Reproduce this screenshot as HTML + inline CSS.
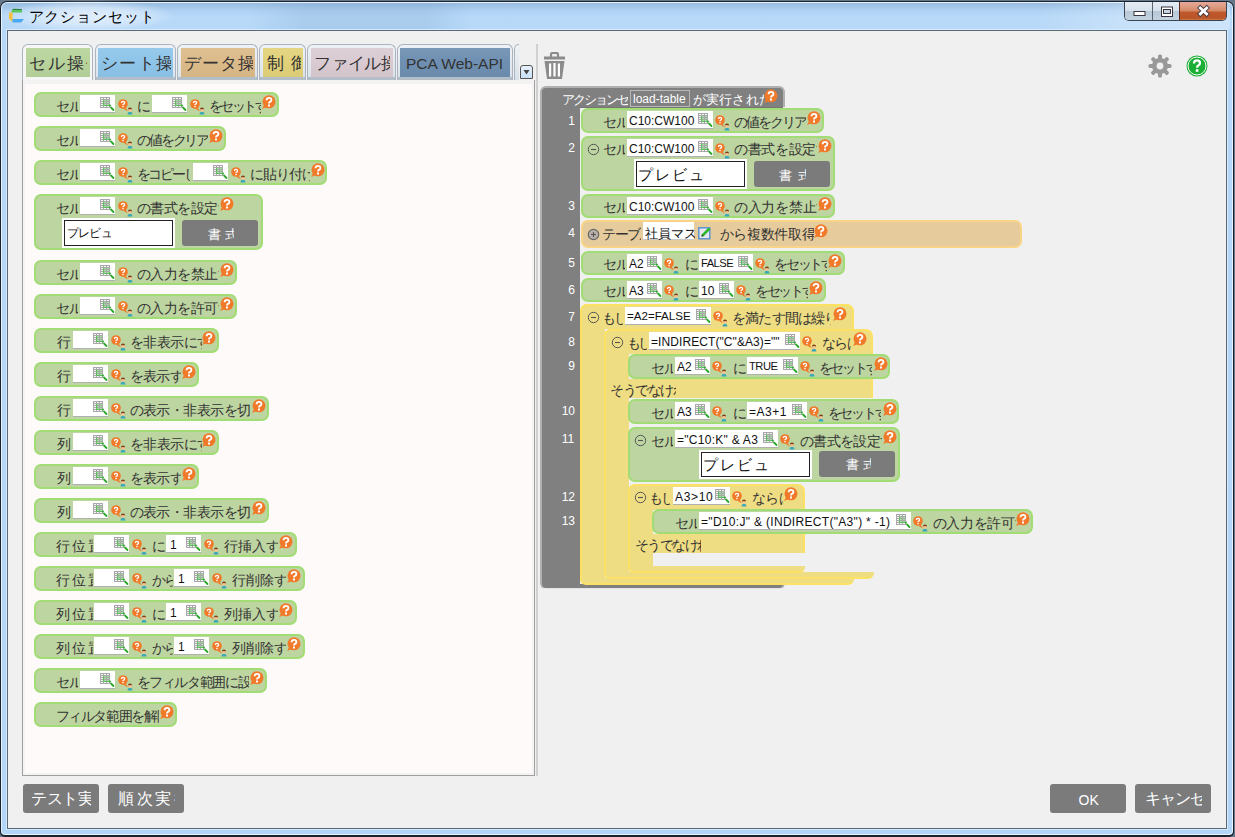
<!DOCTYPE html>
<html><head><meta charset="utf-8"><title>アクションセット設定</title>
<style>
html,body{margin:0;padding:0;width:1235px;height:837px;overflow:hidden;background:#66788a}
body{position:relative;font-family:"Liberation Sans", sans-serif}
body>div,body>span,body>svg{position:absolute}
.t{white-space:nowrap;font-family:"Liberation Sans", sans-serif}
.inp{height:17px;background:#fff;border-bottom:1px solid #b0b0b0}
.btn{background:#7b7b7b;color:#fff;border-radius:3px;text-align:center;font-family:"Liberation Sans", sans-serif}
</style></head>
<body>

<svg width="0" height="0" style="position:absolute;left:0;top:0">
<defs>
<symbol id="grid" viewBox="0 0 15 15">
 <rect x="0" y="0" width="10" height="11" fill="#a8a8a8"/>
 <path d="M1 1H3V2H1ZM4 1H6V2H4ZM7 1H9V2H7ZM1 3H3V4H1ZM1 5H3V6H1ZM1 7H3V8H1ZM1 9H3V10H1ZM4 9H6V10H4ZM7 9H9V10H7Z" fill="#f6f6f6"/>
 <path d="M4 3H6V4H4ZM7 3H9V4H7ZM4 5H6V6H4ZM7 5H9V6H7ZM4 7H6V8H4ZM7 7H9V8H7Z" fill="#9ee09e"/>
 <path d="M3.5 3V8.5H9.5" stroke="#4cc04c" stroke-width="0.8" fill="none"/>
 <path d="M11 10.5L13.5 13" stroke="#2aa82a" stroke-width="1.8" stroke-linecap="round"/>
 <circle cx="10" cy="8.5" r="0.9" fill="#2aa02a"/>
</symbol>
<symbol id="qi" viewBox="0 0 16 16">
 <path d="M7.5 8.5L10 12.5L5.5 9.8Z" fill="#f07a2a"/>
 <circle cx="5" cy="5" r="4.8" fill="#f07a2a"/>
 <path d="M3.5 4Q3.5 2.3 5 2.3Q6.6 2.3 6.6 3.7Q6.6 4.6 5.6 5.1Q5 5.4 5 6.1" stroke="#fff" stroke-width="1.3" fill="none"/>
 <rect x="4.3" y="6.8" width="1.4" height="1.4" fill="#fff"/>
 <path d="M9.6 15.5Q9.6 12.8 12 12.8Q14.4 12.8 14.4 15.5Z" fill="#3aa8b8"/>
 <circle cx="12" cy="10.8" r="2" fill="#f2c494"/>
 <path d="M9.9 10.4Q10 8.4 12 8.4Q14 8.4 14.1 10.4Q12 9.4 9.9 10.4Z" fill="#7a3a12"/>
</symbol>
<symbol id="bq" viewBox="0 0 15 15">
 <path d="M3.2 9.5L1.2 14L7 11.5Z" fill="#f07a2a"/>
 <circle cx="8" cy="6.8" r="6.5" fill="#f07a2a"/>
 <path d="M5.6 5.3Q5.6 2.9 8 2.9Q10.4 2.9 10.4 4.9Q10.4 6.2 8.9 6.9Q8 7.4 8 8.5" stroke="#fff" stroke-width="1.9" fill="none"/>
 <rect x="7" y="9.5" width="2" height="2" fill="#fff"/>
</symbol>
<symbol id="minus" viewBox="0 0 13 13">
 <circle cx="6.5" cy="6.5" r="5.2" fill="none" stroke="#555" stroke-width="1"/>
 <path d="M4 6.5H9" stroke="#555" stroke-width="1.1"/>
</symbol>
<symbol id="plus" viewBox="0 0 13 13">
 <circle cx="6.5" cy="6.5" r="5.2" fill="#b8b0a8" stroke="#666" stroke-width="1.2"/>
 <path d="M4 6.5H9M6.5 4V9" stroke="#555" stroke-width="1.1"/>
</symbol>
<symbol id="edit" viewBox="0 0 14 14">
 <rect x="0.8" y="1.8" width="11" height="11" fill="#e8e4f0" stroke="#4a8ad0" stroke-width="1.3"/>
 <path d="M4 10L11.5 2.5" stroke="#2eb82e" stroke-width="2.6"/>
 <path d="M3 11L4.5 8.5L5.5 9.5Z" fill="#333"/>
</symbol>
<symbol id="tri" viewBox="0 0 13 14">
 <path d="M3.5 5H9.5L6.5 9.5Z" fill="#444"/>
</symbol>
<symbol id="trash" viewBox="0 0 23 28">
 <path d="M8 5V2.5Q8 1 9.5 1H13.5Q15 1 15 2.5V5" stroke="#8c8c8c" stroke-width="2.2" fill="none"/>
 <rect x="1" y="4.5" width="21" height="3" fill="#8c8c8c"/>
 <path d="M1.5 9H21.5L19 27H4Z" fill="#8c8c8c"/>
 <rect x="6" y="11.5" width="2.2" height="13" fill="#fff"/>
 <rect x="10.4" y="11" width="2.2" height="13.5" fill="#fff"/>
 <rect x="14.8" y="11.5" width="2.2" height="13" fill="#fff"/>
</symbol>
<symbol id="gear" viewBox="0 0 24 24">
 <g fill="#999" transform="translate(12 12)">
  <circle r="8"/>
  <rect x="-2" y="-11.5" width="4" height="6" rx="1.5"/>
  <rect x="-2" y="-11.5" width="4" height="6" rx="1.5" transform="rotate(45)"/>
  <rect x="-2" y="-11.5" width="4" height="6" rx="1.5" transform="rotate(90)"/>
  <rect x="-2" y="-11.5" width="4" height="6" rx="1.5" transform="rotate(135)"/>
  <rect x="-2" y="-11.5" width="4" height="6" rx="1.5" transform="rotate(180)"/>
  <rect x="-2" y="-11.5" width="4" height="6" rx="1.5" transform="rotate(225)"/>
  <rect x="-2" y="-11.5" width="4" height="6" rx="1.5" transform="rotate(270)"/>
  <rect x="-2" y="-11.5" width="4" height="6" rx="1.5" transform="rotate(315)"/>
 </g>
 <circle cx="12" cy="12" r="3.4" fill="#f0f0f0"/>
</symbol>
<symbol id="help" viewBox="0 0 22 22">
 <circle cx="11" cy="11" r="10.5" fill="#1aae34"/>
 <circle cx="11" cy="11" r="9" fill="none" stroke="#fff" stroke-width="1"/>
 <path d="M8 8.5Q8 5.3 11 5.3Q14 5.3 14 8Q14 9.6 12.3 10.5Q11.1 11.2 11.1 12.8" stroke="#fff" stroke-width="2.3" fill="none"/>
 <rect x="9.8" y="14.2" width="2.6" height="2.6" fill="#fff"/>
</symbol>
<symbol id="appicon" viewBox="0 0 15 16">
 <path d="M2 3.5L4.5 0.5L13 1V4.5H3Z" fill="#5cc85c"/>
 <path d="M3.5 1.5H13" stroke="#3a7a5a" stroke-width="1"/>
 <path d="M0 4.5H3.5V14L0 11Z" fill="#f5c040"/>
 <path d="M3.5 11H15L12 14.5H3.5Z" fill="#48a8f0"/>
</symbol>
<symbol id="capmin" viewBox="0 0 102 20">
 <rect x="10" y="10.5" width="11" height="4" fill="#fff" stroke="#3a3440" stroke-width="1"/>
 <rect x="37.5" y="6" width="11" height="9.5" fill="#fff" stroke="#3a3440" stroke-width="1"/>
 <rect x="39.5" y="8.5" width="7" height="4" fill="#c8d4e0" stroke="#3a3440" stroke-width="1"/>
 <path d="M76.3 6.9L82.7 12.9M82.7 6.9L76.3 12.9" stroke="#3a3440" stroke-width="4.6" stroke-linecap="square"/>
 <path d="M76.3 6.9L82.7 12.9M82.7 6.9L76.3 12.9" stroke="#fff" stroke-width="2.8" stroke-linecap="square"/>
</symbol>
</defs>
</svg>

<div style="left:0;top:1px;width:1234px;height:836px;background:#1a2230;border-radius:7px 7px 5px 5px"></div>
<div style="left:1px;top:2px;width:1232px;height:833px;background:#e6f2fe;border-radius:6px 6px 4px 4px"></div>
<div style="left:2px;top:3px;width:1230px;height:831px;background:linear-gradient(180deg,#98bce0 0px,#b0d2f4 8px,#b8d9f8 14px,#b6d7f7 40px,#b3d5f7 100%);border-radius:5px 5px 3px 3px"></div>
<div style="left:250px;top:3px;width:220px;height:26px;background:linear-gradient(90deg,rgba(120,160,200,0) 0%,rgba(120,160,200,.22) 25%,rgba(120,160,200,.22) 80%,rgba(120,160,200,0) 100%)"></div>
<div style="left:0px;top:0px;width:175px;height:32px;background:radial-gradient(closest-side ellipse at 50% 50%,rgba(232,242,252,.85) 0%,rgba(232,242,252,.6) 55%,rgba(232,242,252,0) 100%)"></div>
<div style="left:1040px;top:3px;width:190px;height:26px;background:linear-gradient(110deg,rgba(255,255,255,0) 0%,rgba(255,255,255,.22) 45%,rgba(255,255,255,.3) 100%)"></div>
<div style="left:6px;top:29px;width:1222px;height:801px;background:#d6eafd"></div>
<div style="left:7px;top:30px;width:1218px;height:797px;background:#f0f0f0;border:1px solid #5a6878"></div>
<svg style="left:9px;top:8px" width="15" height="16" viewBox="0 0 15 16"><use href="#appicon"/></svg>
<span class="t" style="left:28.5px;top:6.5px;width:122px;overflow:hidden;font-size:15px;line-height:19px;letter-spacing:0.94px;color:#000;">アクションセット設定</span>
<div style="left:1124px;top:2px;width:101px;height:18px;border:1px solid #3c4450;border-top:none;border-radius:0 0 5px 5px;overflow:hidden"><div style="position:absolute;left:0;top:0;width:27px;height:19px;background:linear-gradient(180deg,#e4ecf4 0%,#d6e1ec 45%,#b9c8d6 50%,#c4d3e0 100%);border-right:1px solid #5a6470"></div><div style="position:absolute;left:28px;top:0;width:26px;height:19px;background:linear-gradient(180deg,#e4ecf4 0%,#d6e1ec 45%,#b9c8d6 50%,#c4d3e0 100%);border-right:1px solid #5a2a1a"></div><div style="position:absolute;left:55px;top:0;width:46px;height:19px;background:linear-gradient(180deg,#e6a89a 0%,#dc9a80 25%,#d48a68 45%,#c0582a 55%,#b85428 85%,#d8905a 100%)"></div></div>
<svg style="left:1124px;top:1px" width="102" height="20" viewBox="0 0 102 20"><use href="#capmin"/></svg>
<div style="left:22px;top:44px;width:69px;height:40px;background:#f6f6f6;border:1px solid #a9b4c0;border-bottom:none;border-radius:6px 6px 0 0"></div>
<div style="left:26px;top:48px;width:64px;height:29px;background:linear-gradient(180deg,#bdd7a3 0%,#b8d49c 45%,#b2cd97 100%)"></div>
<span class="t" style="left:29.3px;top:52.5px;width:58px;overflow:hidden;font-size:17px;line-height:21px;letter-spacing:1.97px;color:#333;">セル操作</span>
<div style="left:95px;top:44px;width:79px;height:36px;background:linear-gradient(180deg,#eef2f6,#d8e0e8);border:1px solid #a9b4c0;border-bottom:none;border-radius:6px 6px 0 0"></div>
<div style="left:96px;top:77px;width:79px;height:4px;background:#b4bec8"></div>
<div style="left:98px;top:48px;width:75px;height:29px;background:linear-gradient(180deg,#97c9ea 0%,#8ec5e9 45%,#89bfe2 100%)"></div>
<span class="t" style="left:101.3px;top:52.5px;width:70px;overflow:hidden;font-size:17px;line-height:21px;letter-spacing:1.16px;color:#333;">シート操作</span>
<div style="left:177px;top:44px;width:79px;height:36px;background:linear-gradient(180deg,#eef2f6,#d8e0e8);border:1px solid #a9b4c0;border-bottom:none;border-radius:6px 6px 0 0"></div>
<div style="left:178px;top:77px;width:79px;height:4px;background:#b4bec8"></div>
<div style="left:181px;top:48px;width:74px;height:29px;background:linear-gradient(180deg,#dec093 0%,#dcbb8a 45%,#d5b585 100%)"></div>
<span class="t" style="left:184.3px;top:52.5px;width:69px;overflow:hidden;font-size:17px;line-height:21px;letter-spacing:0.91px;color:#333;">データ操作</span>
<div style="left:259px;top:44px;width:45px;height:36px;background:linear-gradient(180deg,#eef2f6,#d8e0e8);border:1px solid #a9b4c0;border-bottom:none;border-radius:6px 6px 0 0"></div>
<div style="left:260px;top:77px;width:45px;height:4px;background:#b4bec8"></div>
<div style="left:263px;top:48px;width:40px;height:29px;background:linear-gradient(180deg,#e4d584 0%,#e2d27a 45%,#dbcb76 100%)"></div>
<span class="t" style="left:267.3px;top:52.5px;width:34px;overflow:hidden;font-size:17px;line-height:21px;letter-spacing:6.90px;color:#333;">制御</span>
<div style="left:307px;top:44px;width:87px;height:36px;background:linear-gradient(180deg,#eef2f6,#d8e0e8);border:1px solid #a9b4c0;border-bottom:none;border-radius:6px 6px 0 0"></div>
<div style="left:308px;top:77px;width:87px;height:4px;background:#b4bec8"></div>
<div style="left:311px;top:48px;width:82px;height:29px;background:linear-gradient(180deg,#dccfd6 0%,#dacbd3 45%,#d3c4cc 100%)"></div>
<span class="t" style="left:314.3px;top:52.5px;width:76px;overflow:hidden;font-size:17px;line-height:21px;letter-spacing:-0.32px;color:#333;">ファイル操作</span>
<div style="left:397px;top:44px;width:114px;height:36px;background:linear-gradient(180deg,#eef2f6,#d8e0e8);border:1px solid #a9b4c0;border-bottom:none;border-radius:6px 6px 0 0"></div>
<div style="left:398px;top:77px;width:114px;height:4px;background:#b4bec8"></div>
<div style="left:400px;top:48px;width:110px;height:29px;background:linear-gradient(180deg,#7a98b8 0%,#6f90b2 45%,#6b8bac 100%)"></div>
<span class="t" style="left:406px;top:54.0px;font-size:15.5px;line-height:19.5px;color:#333;">PCA Web-API</span>
<div style="left:514px;top:44px;width:4px;height:36px;background:linear-gradient(180deg,#eef2f6,#d8e0e8);border-left:1px solid #a9b4c0;border-top:1px solid #a9b4c0;border-radius:5px 0 0 0"></div>
<div style="left:520px;top:65px;width:11px;height:12px;background:linear-gradient(180deg,#e8f2fc,#c8e0f6);border:1px solid #555;border-radius:3px 3px 0 0"></div>
<svg style="left:520px;top:65px" width="13" height="14" viewBox="0 0 13 14"><use href="#tri"/></svg>
<div style="left:22px;top:80px;width:511px;height:695px;background:#f3f3f3;border:1px solid #a0a0a0;border-top:none"></div>
<div style="left:25px;top:84px;width:507px;height:689px;background:#fdfaf9"></div>
<div style="left:536px;top:44px;width:2px;height:732px;background:#d0d0d0"></div>
<div style="left:34px;top:92px;width:241px;height:21px;background:#bdd5a0;border:2px solid #a2dc74;border-radius:7px;"></div>
<span class="t" style="left:55.6px;top:97.0px;width:22px;overflow:hidden;font-size:14px;line-height:18px;letter-spacing:-0.20px;color:#333;">セル</span>
<div class="inp" style="left:80px;top:95px;width:35px;"></div>
<svg style="left:100px;top:97px" width="15" height="15" viewBox="0 0 15 15"><use href="#grid"/></svg>
<svg style="left:117.5px;top:99px" width="16" height="16" viewBox="0 0 16 16"><use href="#qi"/></svg>
<span class="t" style="left:137.2px;top:97.0px;width:13px;overflow:hidden;font-size:14px;line-height:18px;letter-spacing:0.00px;color:#333;">に</span>
<div class="inp" style="left:152px;top:95px;width:35px;"></div>
<svg style="left:172px;top:97px" width="15" height="15" viewBox="0 0 15 15"><use href="#grid"/></svg>
<svg style="left:189.5px;top:99px" width="16" height="16" viewBox="0 0 16 16"><use href="#qi"/></svg>
<span class="t" style="left:208.6px;top:97.0px;width:52px;overflow:hidden;font-size:14px;line-height:18px;letter-spacing:-2.44px;color:#333;">をセットする</span>
<svg style="left:261px;top:95px" width="15" height="15" viewBox="0 0 15 15"><use href="#bq"/></svg>
<div style="left:34px;top:126px;width:188px;height:21px;background:#bdd5a0;border:2px solid #a2dc74;border-radius:7px;"></div>
<span class="t" style="left:55.6px;top:131.0px;width:22px;overflow:hidden;font-size:14px;line-height:18px;letter-spacing:-0.20px;color:#333;">セル</span>
<div class="inp" style="left:80px;top:129px;width:35px;"></div>
<svg style="left:100px;top:131px" width="15" height="15" viewBox="0 0 15 15"><use href="#grid"/></svg>
<svg style="left:117.5px;top:133px" width="16" height="16" viewBox="0 0 16 16"><use href="#qi"/></svg>
<span class="t" style="left:136.6px;top:131.0px;width:71px;overflow:hidden;font-size:14px;line-height:18px;letter-spacing:-2.03px;color:#333;">の値をクリアする</span>
<svg style="left:208px;top:129px" width="15" height="15" viewBox="0 0 15 15"><use href="#bq"/></svg>
<div style="left:34px;top:160px;width:289px;height:21px;background:#bdd5a0;border:2px solid #a2dc74;border-radius:7px;"></div>
<span class="t" style="left:55.6px;top:165.0px;width:22px;overflow:hidden;font-size:14px;line-height:18px;letter-spacing:-0.20px;color:#333;">セル</span>
<div class="inp" style="left:80px;top:163px;width:35px;"></div>
<svg style="left:100px;top:165px" width="15" height="15" viewBox="0 0 15 15"><use href="#grid"/></svg>
<svg style="left:117.5px;top:167px" width="16" height="16" viewBox="0 0 16 16"><use href="#qi"/></svg>
<span class="t" style="left:136.6px;top:165.0px;width:53px;overflow:hidden;font-size:14px;line-height:18px;letter-spacing:-2.24px;color:#333;">をコピーして</span>
<div class="inp" style="left:193px;top:163px;width:35px;"></div>
<svg style="left:213px;top:165px" width="15" height="15" viewBox="0 0 15 15"><use href="#grid"/></svg>
<svg style="left:230.5px;top:167px" width="16" height="16" viewBox="0 0 16 16"><use href="#qi"/></svg>
<span class="t" style="left:249.6px;top:165.0px;width:60px;overflow:hidden;font-size:14px;line-height:18px;letter-spacing:-0.84px;color:#333;">に貼り付ける</span>
<svg style="left:310px;top:163px" width="15" height="15" viewBox="0 0 15 15"><use href="#bq"/></svg>
<div style="left:34px;top:194px;width:225px;height:52px;background:#bdd5a0;border:2px solid #a2dc74;border-radius:7px;"></div>
<span class="t" style="left:55.6px;top:199.0px;width:22px;overflow:hidden;font-size:14px;line-height:18px;letter-spacing:-0.20px;color:#333;">セル</span>
<div class="inp" style="left:80px;top:197px;width:35px;"></div>
<svg style="left:100px;top:199px" width="15" height="15" viewBox="0 0 15 15"><use href="#grid"/></svg>
<svg style="left:117.5px;top:201px" width="16" height="16" viewBox="0 0 16 16"><use href="#qi"/></svg>
<span class="t" style="left:136.6px;top:199.0px;width:82px;overflow:hidden;font-size:14px;line-height:18px;letter-spacing:-0.46px;color:#333;">の書式を設定する</span>
<svg style="left:219px;top:197px" width="15" height="15" viewBox="0 0 15 15"><use href="#bq"/></svg>
<div style="left:62px;top:218px;width:113px;height:30px;background:#fff"></div>
<div style="left:64px;top:220px;width:107px;height:24px;border:1px solid #222;background:#fff"></div>
<span class="t" style="left:66.8px;top:225.0px;width:44px;overflow:hidden;font-size:12px;line-height:16px;letter-spacing:-0.65px;color:#111;">プレビュー</span>
<div class="btn" style="left:182px;top:220px;width:76px;height:26px"></div>
<span class="t" style="left:207.7px;top:225.5px;width:26px;overflow:hidden;font-size:13px;line-height:17px;letter-spacing:4.60px;color:#fff;">書式</span>
<div style="left:34px;top:260px;width:199px;height:21px;background:#bdd5a0;border:2px solid #a2dc74;border-radius:7px;"></div>
<span class="t" style="left:55.6px;top:265.0px;width:22px;overflow:hidden;font-size:14px;line-height:18px;letter-spacing:-0.20px;color:#333;">セル</span>
<div class="inp" style="left:80px;top:263px;width:35px;"></div>
<svg style="left:100px;top:265px" width="15" height="15" viewBox="0 0 15 15"><use href="#grid"/></svg>
<svg style="left:117.5px;top:267px" width="16" height="16" viewBox="0 0 16 16"><use href="#qi"/></svg>
<span class="t" style="left:136.6px;top:265.0px;width:82px;overflow:hidden;font-size:14px;line-height:18px;letter-spacing:-0.46px;color:#333;">の入力を禁止する</span>
<svg style="left:219px;top:263px" width="15" height="15" viewBox="0 0 15 15"><use href="#bq"/></svg>
<div style="left:34px;top:294px;width:199px;height:21px;background:#bdd5a0;border:2px solid #a2dc74;border-radius:7px;"></div>
<span class="t" style="left:55.6px;top:299.0px;width:22px;overflow:hidden;font-size:14px;line-height:18px;letter-spacing:-0.20px;color:#333;">セル</span>
<div class="inp" style="left:80px;top:297px;width:35px;"></div>
<svg style="left:100px;top:299px" width="15" height="15" viewBox="0 0 15 15"><use href="#grid"/></svg>
<svg style="left:117.5px;top:301px" width="16" height="16" viewBox="0 0 16 16"><use href="#qi"/></svg>
<span class="t" style="left:136.6px;top:299.0px;width:82px;overflow:hidden;font-size:14px;line-height:18px;letter-spacing:-0.46px;color:#333;">の入力を許可する</span>
<svg style="left:219px;top:297px" width="15" height="15" viewBox="0 0 15 15"><use href="#bq"/></svg>
<div style="left:34px;top:328px;width:181px;height:21px;background:#bdd5a0;border:2px solid #a2dc74;border-radius:7px;"></div>
<span class="t" style="left:57.2px;top:333.0px;width:14px;overflow:hidden;font-size:14px;line-height:18px;letter-spacing:0.00px;color:#333;">行</span>
<div class="inp" style="left:73px;top:331px;width:35px;"></div>
<svg style="left:93px;top:333px" width="15" height="15" viewBox="0 0 15 15"><use href="#grid"/></svg>
<svg style="left:110.5px;top:335px" width="16" height="16" viewBox="0 0 16 16"><use href="#qi"/></svg>
<span class="t" style="left:129.6px;top:333.0px;width:72px;overflow:hidden;font-size:14px;line-height:18px;letter-spacing:-0.45px;color:#333;">を非表示にする</span>
<svg style="left:201px;top:331px" width="15" height="15" viewBox="0 0 15 15"><use href="#bq"/></svg>
<div style="left:34px;top:362px;width:161px;height:21px;background:#bdd5a0;border:2px solid #a2dc74;border-radius:7px;"></div>
<span class="t" style="left:57.2px;top:367.0px;width:14px;overflow:hidden;font-size:14px;line-height:18px;letter-spacing:0.00px;color:#333;">行</span>
<div class="inp" style="left:73px;top:365px;width:35px;"></div>
<svg style="left:93px;top:367px" width="15" height="15" viewBox="0 0 15 15"><use href="#grid"/></svg>
<svg style="left:110.5px;top:369px" width="16" height="16" viewBox="0 0 16 16"><use href="#qi"/></svg>
<span class="t" style="left:129.6px;top:367.0px;width:51px;overflow:hidden;font-size:14px;line-height:18px;letter-spacing:-0.68px;color:#333;">を表示する</span>
<svg style="left:181px;top:365px" width="15" height="15" viewBox="0 0 15 15"><use href="#bq"/></svg>
<div style="left:34px;top:396px;width:231px;height:21px;background:#bdd5a0;border:2px solid #a2dc74;border-radius:7px;"></div>
<span class="t" style="left:57.2px;top:401.0px;width:14px;overflow:hidden;font-size:14px;line-height:18px;letter-spacing:0.00px;color:#333;">行</span>
<div class="inp" style="left:73px;top:399px;width:35px;"></div>
<svg style="left:93px;top:401px" width="15" height="15" viewBox="0 0 15 15"><use href="#grid"/></svg>
<svg style="left:110.5px;top:403px" width="16" height="16" viewBox="0 0 16 16"><use href="#qi"/></svg>
<span class="t" style="left:129.6px;top:401.0px;width:121px;overflow:hidden;font-size:14px;line-height:18px;letter-spacing:-0.56px;color:#333;">の表示・非表示を切替える</span>
<svg style="left:251px;top:399px" width="15" height="15" viewBox="0 0 15 15"><use href="#bq"/></svg>
<div style="left:34px;top:430px;width:181px;height:21px;background:#bdd5a0;border:2px solid #a2dc74;border-radius:7px;"></div>
<span class="t" style="left:57.2px;top:435.0px;width:14px;overflow:hidden;font-size:14px;line-height:18px;letter-spacing:0.00px;color:#333;">列</span>
<div class="inp" style="left:73px;top:433px;width:35px;"></div>
<svg style="left:93px;top:435px" width="15" height="15" viewBox="0 0 15 15"><use href="#grid"/></svg>
<svg style="left:110.5px;top:437px" width="16" height="16" viewBox="0 0 16 16"><use href="#qi"/></svg>
<span class="t" style="left:129.6px;top:435.0px;width:72px;overflow:hidden;font-size:14px;line-height:18px;letter-spacing:-0.45px;color:#333;">を非表示にする</span>
<svg style="left:201px;top:433px" width="15" height="15" viewBox="0 0 15 15"><use href="#bq"/></svg>
<div style="left:34px;top:464px;width:161px;height:21px;background:#bdd5a0;border:2px solid #a2dc74;border-radius:7px;"></div>
<span class="t" style="left:57.2px;top:469.0px;width:14px;overflow:hidden;font-size:14px;line-height:18px;letter-spacing:0.00px;color:#333;">列</span>
<div class="inp" style="left:73px;top:467px;width:35px;"></div>
<svg style="left:93px;top:469px" width="15" height="15" viewBox="0 0 15 15"><use href="#grid"/></svg>
<svg style="left:110.5px;top:471px" width="16" height="16" viewBox="0 0 16 16"><use href="#qi"/></svg>
<span class="t" style="left:129.6px;top:469.0px;width:51px;overflow:hidden;font-size:14px;line-height:18px;letter-spacing:-0.68px;color:#333;">を表示する</span>
<svg style="left:181px;top:467px" width="15" height="15" viewBox="0 0 15 15"><use href="#bq"/></svg>
<div style="left:34px;top:498px;width:231px;height:21px;background:#bdd5a0;border:2px solid #a2dc74;border-radius:7px;"></div>
<span class="t" style="left:57.2px;top:503.0px;width:14px;overflow:hidden;font-size:14px;line-height:18px;letter-spacing:0.00px;color:#333;">列</span>
<div class="inp" style="left:73px;top:501px;width:35px;"></div>
<svg style="left:93px;top:503px" width="15" height="15" viewBox="0 0 15 15"><use href="#grid"/></svg>
<svg style="left:110.5px;top:505px" width="16" height="16" viewBox="0 0 16 16"><use href="#qi"/></svg>
<span class="t" style="left:129.6px;top:503.0px;width:121px;overflow:hidden;font-size:14px;line-height:18px;letter-spacing:-0.56px;color:#333;">の表示・非表示を切替える</span>
<svg style="left:251px;top:501px" width="15" height="15" viewBox="0 0 15 15"><use href="#bq"/></svg>
<div style="left:34px;top:532px;width:259px;height:21px;background:#bdd5a0;border:2px solid #a2dc74;border-radius:7px;"></div>
<span class="t" style="left:55.6px;top:537.0px;width:37px;overflow:hidden;font-size:14px;line-height:18px;letter-spacing:2.15px;color:#333;">行位置</span>
<div class="inp" style="left:94px;top:535px;width:35px;"></div>
<svg style="left:114px;top:537px" width="15" height="15" viewBox="0 0 15 15"><use href="#grid"/></svg>
<svg style="left:131.5px;top:539px" width="16" height="16" viewBox="0 0 16 16"><use href="#qi"/></svg>
<span class="t" style="left:151.8px;top:537.0px;width:13px;overflow:hidden;font-size:14px;line-height:18px;letter-spacing:0.00px;color:#333;">に</span>
<div class="inp" style="left:166px;top:535px;width:35px;"></div>
<span class="t" style="left:170.0px;top:537.0px;font-size:12px;line-height:16px;letter-spacing:0.00px;color:#111;">1</span>
<svg style="left:186px;top:537px" width="15" height="15" viewBox="0 0 15 15"><use href="#grid"/></svg>
<svg style="left:203.5px;top:539px" width="16" height="16" viewBox="0 0 16 16"><use href="#qi"/></svg>
<span class="t" style="left:223.6px;top:537.0px;width:54px;overflow:hidden;font-size:14px;line-height:18px;letter-spacing:0.07px;color:#333;">行挿入する</span>
<svg style="left:278px;top:535px" width="15" height="15" viewBox="0 0 15 15"><use href="#bq"/></svg>
<div style="left:34px;top:566px;width:267px;height:21px;background:#bdd5a0;border:2px solid #a2dc74;border-radius:7px;"></div>
<span class="t" style="left:55.6px;top:571.0px;width:37px;overflow:hidden;font-size:14px;line-height:18px;letter-spacing:2.15px;color:#333;">行位置</span>
<div class="inp" style="left:94px;top:569px;width:35px;"></div>
<svg style="left:114px;top:571px" width="15" height="15" viewBox="0 0 15 15"><use href="#grid"/></svg>
<svg style="left:131.5px;top:573px" width="16" height="16" viewBox="0 0 16 16"><use href="#qi"/></svg>
<span class="t" style="left:151.6px;top:571.0px;width:21px;overflow:hidden;font-size:14px;line-height:18px;letter-spacing:-1.20px;color:#333;">から</span>
<div class="inp" style="left:174px;top:569px;width:35px;"></div>
<span class="t" style="left:178.0px;top:571.0px;font-size:12px;line-height:16px;letter-spacing:0.00px;color:#111;">1</span>
<svg style="left:194px;top:571px" width="15" height="15" viewBox="0 0 15 15"><use href="#grid"/></svg>
<svg style="left:211.5px;top:573px" width="16" height="16" viewBox="0 0 16 16"><use href="#qi"/></svg>
<span class="t" style="left:231.6px;top:571.0px;width:54px;overflow:hidden;font-size:14px;line-height:18px;letter-spacing:0.07px;color:#333;">行削除する</span>
<svg style="left:286px;top:569px" width="15" height="15" viewBox="0 0 15 15"><use href="#bq"/></svg>
<div style="left:34px;top:600px;width:259px;height:21px;background:#bdd5a0;border:2px solid #a2dc74;border-radius:7px;"></div>
<span class="t" style="left:55.6px;top:605.0px;width:37px;overflow:hidden;font-size:14px;line-height:18px;letter-spacing:2.15px;color:#333;">列位置</span>
<div class="inp" style="left:94px;top:603px;width:35px;"></div>
<svg style="left:114px;top:605px" width="15" height="15" viewBox="0 0 15 15"><use href="#grid"/></svg>
<svg style="left:131.5px;top:607px" width="16" height="16" viewBox="0 0 16 16"><use href="#qi"/></svg>
<span class="t" style="left:151.8px;top:605.0px;width:13px;overflow:hidden;font-size:14px;line-height:18px;letter-spacing:0.00px;color:#333;">に</span>
<div class="inp" style="left:166px;top:603px;width:35px;"></div>
<span class="t" style="left:170.0px;top:605.0px;font-size:12px;line-height:16px;letter-spacing:0.00px;color:#111;">1</span>
<svg style="left:186px;top:605px" width="15" height="15" viewBox="0 0 15 15"><use href="#grid"/></svg>
<svg style="left:203.5px;top:607px" width="16" height="16" viewBox="0 0 16 16"><use href="#qi"/></svg>
<span class="t" style="left:223.6px;top:605.0px;width:54px;overflow:hidden;font-size:14px;line-height:18px;letter-spacing:0.07px;color:#333;">列挿入する</span>
<svg style="left:278px;top:603px" width="15" height="15" viewBox="0 0 15 15"><use href="#bq"/></svg>
<div style="left:34px;top:634px;width:267px;height:21px;background:#bdd5a0;border:2px solid #a2dc74;border-radius:7px;"></div>
<span class="t" style="left:55.6px;top:639.0px;width:37px;overflow:hidden;font-size:14px;line-height:18px;letter-spacing:2.15px;color:#333;">列位置</span>
<div class="inp" style="left:94px;top:637px;width:35px;"></div>
<svg style="left:114px;top:639px" width="15" height="15" viewBox="0 0 15 15"><use href="#grid"/></svg>
<svg style="left:131.5px;top:641px" width="16" height="16" viewBox="0 0 16 16"><use href="#qi"/></svg>
<span class="t" style="left:151.6px;top:639.0px;width:21px;overflow:hidden;font-size:14px;line-height:18px;letter-spacing:-1.20px;color:#333;">から</span>
<div class="inp" style="left:174px;top:637px;width:35px;"></div>
<span class="t" style="left:178.0px;top:639.0px;font-size:12px;line-height:16px;letter-spacing:0.00px;color:#111;">1</span>
<svg style="left:194px;top:639px" width="15" height="15" viewBox="0 0 15 15"><use href="#grid"/></svg>
<svg style="left:211.5px;top:641px" width="16" height="16" viewBox="0 0 16 16"><use href="#qi"/></svg>
<span class="t" style="left:231.6px;top:639.0px;width:54px;overflow:hidden;font-size:14px;line-height:18px;letter-spacing:0.07px;color:#333;">列削除する</span>
<svg style="left:286px;top:637px" width="15" height="15" viewBox="0 0 15 15"><use href="#bq"/></svg>
<div style="left:34px;top:668px;width:229px;height:21px;background:#bdd5a0;border:2px solid #a2dc74;border-radius:7px;"></div>
<span class="t" style="left:55.6px;top:673.0px;width:22px;overflow:hidden;font-size:14px;line-height:18px;letter-spacing:-0.20px;color:#333;">セル</span>
<div class="inp" style="left:80px;top:671px;width:35px;"></div>
<svg style="left:100px;top:673px" width="15" height="15" viewBox="0 0 15 15"><use href="#grid"/></svg>
<svg style="left:117.5px;top:675px" width="16" height="16" viewBox="0 0 16 16"><use href="#qi"/></svg>
<span class="t" style="left:136.6px;top:673.0px;width:112px;overflow:hidden;font-size:14px;line-height:18px;letter-spacing:-1.38px;color:#333;">をフィルタ範囲に設定する</span>
<svg style="left:249px;top:671px" width="15" height="15" viewBox="0 0 15 15"><use href="#bq"/></svg>
<div style="left:34px;top:702px;width:139px;height:21px;background:#bdd5a0;border:2px solid #a2dc74;border-radius:7px;"></div>
<span class="t" style="left:55.6px;top:707.0px;width:103px;overflow:hidden;font-size:14px;line-height:18px;letter-spacing:-1.37px;color:#333;">フィルタ範囲を解除する</span>
<svg style="left:159px;top:705px" width="15" height="15" viewBox="0 0 15 15"><use href="#bq"/></svg>
<svg style="left:543px;top:52px" width="23" height="28" viewBox="0 0 23 28"><use href="#trash"/></svg>
<svg style="left:1148px;top:54px" width="24" height="24" viewBox="0 0 24 24"><use href="#gear"/></svg>
<svg style="left:1186px;top:55px" width="22" height="22" viewBox="0 0 22 22"><use href="#help"/></svg>
<div style="left:541px;top:586px;width:243px;height:3px;background:linear-gradient(180deg,rgba(0,0,0,.28),rgba(0,0,0,0));border-radius:0 0 4px 4px"></div>
<div style="left:540px;top:86px;width:241px;height:500px;background:#808080;border:2px solid #b0b0b0;border-bottom:none;border-radius:6px 6px 5px 5px"></div>
<div style="left:580px;top:107px;width:205px;height:477px;background:#f0f0f0"></div>
<div style="left:580px;top:107px;width:203px;height:1px;background:#747474"></div>
<span class="t" style="left:562.2px;top:91.0px;width:66px;overflow:hidden;font-size:13px;line-height:17px;letter-spacing:-1.99px;color:#fff;">アクションセット</span>
<div style="left:630px;top:90px;width:58px;height:15px;border:1px solid #b8b8b8"></div>
<span class="t" style="left:633px;top:90.7px;font-size:12px;line-height:16px;color:#fff;">load-table</span>
<span class="t" style="left:692.7px;top:91.0px;width:71px;overflow:hidden;font-size:13px;line-height:17px;letter-spacing:0.22px;color:#fff;">が実行されたら</span>
<svg style="left:763px;top:89px" width="15" height="15" viewBox="0 0 15 15"><use href="#bq"/></svg>
<span class="t" style="left:568.33px;top:113.2px;font-size:12px;line-height:16px;color:#fff;">1</span>
<span class="t" style="left:568.33px;top:140.2px;font-size:12px;line-height:16px;color:#fff;">2</span>
<span class="t" style="left:568.33px;top:198.2px;font-size:12px;line-height:16px;color:#fff;">3</span>
<span class="t" style="left:568.33px;top:225.2px;font-size:12px;line-height:16px;color:#fff;">4</span>
<span class="t" style="left:568.33px;top:255.2px;font-size:12px;line-height:16px;color:#fff;">5</span>
<span class="t" style="left:568.33px;top:282.2px;font-size:12px;line-height:16px;color:#fff;">6</span>
<span class="t" style="left:568.33px;top:309.2px;font-size:12px;line-height:16px;color:#fff;">7</span>
<span class="t" style="left:568.33px;top:334.2px;font-size:12px;line-height:16px;color:#fff;">8</span>
<span class="t" style="left:568.33px;top:358.2px;font-size:12px;line-height:16px;color:#fff;">9</span>
<span class="t" style="left:561.66px;top:403.2px;font-size:12px;line-height:16px;color:#fff;">10</span>
<span class="t" style="left:561.66px;top:431.2px;font-size:12px;line-height:16px;color:#fff;">11</span>
<span class="t" style="left:561.66px;top:489.2px;font-size:12px;line-height:16px;color:#fff;">12</span>
<span class="t" style="left:561.66px;top:513.2px;font-size:12px;line-height:16px;color:#fff;">13</span>
<div style="left:580px;top:578px;width:272px;height:5px;background:#eedd82;border-bottom:2px solid #fce264;border-left:2px solid #fce264;border-radius:0 0 6px 6px"></div>
<div style="left:604px;top:572px;width:268px;height:5px;background:#eedd82;border-bottom:2px solid #fce264;border-left:2px solid #fce264;border-radius:0 0 6px 6px"></div>
<div style="left:628px;top:566px;width:175px;height:5px;background:#eedd82;border-bottom:2px solid #fce264;border-left:2px solid #fce264;border-radius:0 0 6px 6px"></div>
<div style="left:580px;top:304px;width:23px;height:276px;background:#eedd82;border-left:2px solid #fce264;border-radius:7px 0 0 0"></div>
<div style="left:604px;top:329px;width:23px;height:245px;background:#eedd82;border-left:2px solid #fce264;border-radius:7px 0 0 0"></div>
<div style="left:628px;top:485px;width:23px;height:83px;background:#eedd82;border-left:2px solid #fce264;border-radius:7px 0 0 0"></div>
<div style="left:580px;top:304px;width:274px;height:25px;background:#eedd82;border:2px solid #fce264;border-bottom:none;border-radius:7px 7px 0 0;box-sizing:border-box"></div>
<div style="left:604px;top:329px;width:269px;height:25px;background:#eedd82;border:2px solid #fce264;border-bottom:none;border-radius:7px 7px 0 0;box-sizing:border-box"></div>
<div style="left:604px;top:379px;width:269px;height:19px;background:#eedd82;border-right:2px solid #fce264;border-left:2px solid #fce264;box-sizing:border-box"></div>
<div style="left:628px;top:484px;width:177px;height:26px;background:#eedd82;border:2px solid #fce264;border-bottom:none;border-radius:7px 7px 0 0;box-sizing:border-box"></div>
<div style="left:628px;top:534px;width:177px;height:19px;background:#eedd82;border-right:2px solid #fce264;border-left:2px solid #fce264;box-sizing:border-box"></div>
<div style="left:581px;top:108px;width:239px;height:21px;background:#bdd5a0;border:2px solid #a2dc74;border-radius:7px;"></div>
<span class="t" style="left:602.6px;top:113.0px;width:22px;overflow:hidden;font-size:14px;line-height:18px;letter-spacing:-0.70px;color:#333;">セル</span>
<div class="inp" style="left:627px;top:111px;width:86px;"></div>
<span class="t" style="left:629.0px;top:113.0px;font-size:12px;line-height:16px;letter-spacing:0.00px;color:#111;">C10:CW100</span>
<svg style="left:698px;top:113px" width="15" height="15" viewBox="0 0 15 15"><use href="#grid"/></svg>
<svg style="left:715px;top:115px" width="16" height="16" viewBox="0 0 16 16"><use href="#qi"/></svg>
<span class="t" style="left:734.1px;top:113.0px;width:72px;overflow:hidden;font-size:14px;line-height:18px;letter-spacing:-1.96px;color:#333;">の値をクリアする</span>
<svg style="left:806px;top:111px" width="15" height="15" viewBox="0 0 15 15"><use href="#bq"/></svg>
<div style="left:581px;top:136px;width:250px;height:51px;background:#bdd5a0;border:2px solid #a2dc74;border-radius:7px;"></div>
<svg style="left:587px;top:143px" width="13" height="13" viewBox="0 0 13 13"><use href="#minus"/></svg>
<span class="t" style="left:602.6px;top:140.0px;width:22px;overflow:hidden;font-size:14px;line-height:18px;letter-spacing:-0.70px;color:#333;">セル</span>
<div class="inp" style="left:627px;top:139px;width:86px;"></div>
<span class="t" style="left:629.0px;top:141.0px;font-size:12px;line-height:16px;letter-spacing:0.00px;color:#111;">C10:CW100</span>
<svg style="left:698px;top:141px" width="15" height="15" viewBox="0 0 15 15"><use href="#grid"/></svg>
<svg style="left:715px;top:143px" width="16" height="16" viewBox="0 0 16 16"><use href="#qi"/></svg>
<span class="t" style="left:734.1px;top:140.0px;width:83px;overflow:hidden;font-size:14px;line-height:18px;letter-spacing:-0.39px;color:#333;">の書式を設定する</span>
<svg style="left:817px;top:139px" width="15" height="15" viewBox="0 0 15 15"><use href="#bq"/></svg>
<div style="left:634px;top:159px;width:113px;height:30px;background:#fff"></div>
<div style="left:636px;top:161px;width:107px;height:24px;border:1px solid #222;background:#fff"></div>
<span class="t" style="left:637.5px;top:164.5px;width:67px;overflow:hidden;font-size:15px;line-height:19px;letter-spacing:2.31px;color:#111;">プレビュー</span>
<div class="btn" style="left:754px;top:161px;width:76px;height:26px"></div>
<span class="t" style="left:779.2px;top:166.5px;width:27px;overflow:hidden;font-size:13px;line-height:17px;letter-spacing:5.60px;color:#fff;">書式</span>
<div style="left:581px;top:194px;width:250px;height:20px;background:#bdd5a0;border:2px solid #a2dc74;border-radius:7px;"></div>
<span class="t" style="left:602.6px;top:198.0px;width:22px;overflow:hidden;font-size:14px;line-height:18px;letter-spacing:-0.70px;color:#333;">セル</span>
<div class="inp" style="left:627px;top:197px;width:86px;"></div>
<span class="t" style="left:629.0px;top:199.0px;font-size:12px;line-height:16px;letter-spacing:0.00px;color:#111;">C10:CW100</span>
<svg style="left:698px;top:199px" width="15" height="15" viewBox="0 0 15 15"><use href="#grid"/></svg>
<svg style="left:715px;top:201px" width="16" height="16" viewBox="0 0 16 16"><use href="#qi"/></svg>
<span class="t" style="left:734.1px;top:198.0px;width:83px;overflow:hidden;font-size:14px;line-height:18px;letter-spacing:-0.31px;color:#333;">の入力を禁止する</span>
<svg style="left:817px;top:197px" width="15" height="15" viewBox="0 0 15 15"><use href="#bq"/></svg>
<div style="left:581px;top:220px;width:437px;height:24px;background:#e6cc9c;border:2px solid #fad486;border-radius:7px;"></div>
<svg style="left:587px;top:228px" width="13" height="13" viewBox="0 0 13 13"><use href="#plus"/></svg>
<span class="t" style="left:602.1px;top:225.0px;width:39px;overflow:hidden;font-size:14px;line-height:18px;letter-spacing:-1.57px;color:#333;">テーブル</span>
<div style="left:643px;top:222px;width:51px;height:17px;background:#fff;border-bottom:1px solid #c8c8c8"></div>
<span class="t" style="left:644.7px;top:224.5px;width:50px;overflow:hidden;font-size:13px;line-height:17px;letter-spacing:-0.04px;color:#111;">社員マスタ</span>
<svg style="left:698px;top:226px" width="14" height="14" viewBox="0 0 14 14"><use href="#edit"/></svg>
<span class="t" style="left:719.6px;top:225.0px;width:94px;overflow:hidden;font-size:14px;line-height:18px;letter-spacing:-0.28px;color:#333;">から複数件取得する</span>
<svg style="left:813px;top:224px" width="15" height="15" viewBox="0 0 15 15"><use href="#bq"/></svg>
<div style="left:581px;top:251px;width:260px;height:20px;background:#bdd5a0;border:2px solid #a2dc74;border-radius:7px;"></div>
<span class="t" style="left:602.6px;top:255.0px;width:22px;overflow:hidden;font-size:14px;line-height:18px;letter-spacing:-0.70px;color:#333;">セル</span>
<div class="inp" style="left:627px;top:254px;width:35px;"></div>
<span class="t" style="left:629.0px;top:256.0px;font-size:12px;line-height:16px;letter-spacing:0.00px;color:#111;">A2</span>
<svg style="left:647px;top:256px" width="15" height="15" viewBox="0 0 15 15"><use href="#grid"/></svg>
<svg style="left:664px;top:258px" width="16" height="16" viewBox="0 0 16 16"><use href="#qi"/></svg>
<span class="t" style="left:684.8px;top:255.0px;width:13px;overflow:hidden;font-size:14px;line-height:18px;letter-spacing:0.00px;color:#333;">に</span>
<div class="inp" style="left:699px;top:254px;width:54px;"></div>
<span class="t" style="left:701.0px;top:256.4px;font-size:11.16px;line-height:15.16px;letter-spacing:-0.53px;color:#111;">FALSE</span>
<svg style="left:738px;top:256px" width="15" height="15" viewBox="0 0 15 15"><use href="#grid"/></svg>
<svg style="left:755px;top:258px" width="16" height="16" viewBox="0 0 16 16"><use href="#qi"/></svg>
<span class="t" style="left:774.1px;top:255.0px;width:53px;overflow:hidden;font-size:14px;line-height:18px;letter-spacing:-2.24px;color:#333;">をセットする</span>
<svg style="left:827px;top:254px" width="15" height="15" viewBox="0 0 15 15"><use href="#bq"/></svg>
<div style="left:581px;top:278px;width:241px;height:20px;background:#bdd5a0;border:2px solid #a2dc74;border-radius:7px;"></div>
<span class="t" style="left:602.6px;top:282.0px;width:22px;overflow:hidden;font-size:14px;line-height:18px;letter-spacing:-0.70px;color:#333;">セル</span>
<div class="inp" style="left:627px;top:281px;width:35px;"></div>
<span class="t" style="left:629.0px;top:283.0px;font-size:12px;line-height:16px;letter-spacing:0.00px;color:#111;">A3</span>
<svg style="left:647px;top:283px" width="15" height="15" viewBox="0 0 15 15"><use href="#grid"/></svg>
<svg style="left:664px;top:285px" width="16" height="16" viewBox="0 0 16 16"><use href="#qi"/></svg>
<span class="t" style="left:684.8px;top:282.0px;width:13px;overflow:hidden;font-size:14px;line-height:18px;letter-spacing:0.00px;color:#333;">に</span>
<div class="inp" style="left:699px;top:281px;width:35px;"></div>
<span class="t" style="left:701.0px;top:283.0px;font-size:11.99999999999996px;line-height:15.99999999999996px;letter-spacing:0.00px;color:#111;">10</span>
<svg style="left:719px;top:283px" width="15" height="15" viewBox="0 0 15 15"><use href="#grid"/></svg>
<svg style="left:736px;top:285px" width="16" height="16" viewBox="0 0 16 16"><use href="#qi"/></svg>
<span class="t" style="left:755.1px;top:282.0px;width:53px;overflow:hidden;font-size:14px;line-height:18px;letter-spacing:-2.34px;color:#333;">をセットする</span>
<svg style="left:808px;top:281px" width="15" height="15" viewBox="0 0 15 15"><use href="#bq"/></svg>
<svg style="left:587px;top:311px" width="13" height="13" viewBox="0 0 13 13"><use href="#minus"/></svg>
<span class="t" style="left:601.6px;top:309.0px;width:21px;overflow:hidden;font-size:14px;line-height:18px;letter-spacing:-1.20px;color:#333;">もし</span>
<div class="inp" style="left:625px;top:307px;width:86px;"></div>
<span class="t" style="left:627.0px;top:309.2px;font-size:11.591492985734892px;line-height:15.591492985734892px;letter-spacing:0.00px;color:#111;">=A2=FALSE</span>
<svg style="left:696px;top:309px" width="15" height="15" viewBox="0 0 15 15"><use href="#grid"/></svg>
<svg style="left:713px;top:311px" width="16" height="16" viewBox="0 0 16 16"><use href="#qi"/></svg>
<span class="t" style="left:732.1px;top:309.0px;width:99px;overflow:hidden;font-size:14px;line-height:18px;letter-spacing:-0.80px;color:#333;">を満たす間は繰り返す</span>
<svg style="left:832px;top:307px" width="15" height="15" viewBox="0 0 15 15"><use href="#bq"/></svg>
<svg style="left:611px;top:336px" width="13" height="13" viewBox="0 0 13 13"><use href="#minus"/></svg>
<span class="t" style="left:626.6px;top:334.0px;width:20px;overflow:hidden;font-size:14px;line-height:18px;letter-spacing:-2.20px;color:#333;">もし</span>
<div class="inp" style="left:649px;top:332px;width:151px;"></div>
<span class="t" style="left:651.0px;top:334.0px;font-size:12px;line-height:16px;letter-spacing:0.08px;color:#111;">=INDIRECT(&quot;C&quot;&amp;A3)=&quot;&quot;</span>
<svg style="left:785px;top:334px" width="15" height="15" viewBox="0 0 15 15"><use href="#grid"/></svg>
<svg style="left:802px;top:336px" width="16" height="16" viewBox="0 0 16 16"><use href="#qi"/></svg>
<span class="t" style="left:821.6px;top:334.0px;width:30px;overflow:hidden;font-size:14px;line-height:18px;letter-spacing:-1.35px;color:#333;">ならば</span>
<svg style="left:852px;top:332px" width="15" height="15" viewBox="0 0 15 15"><use href="#bq"/></svg>
<div style="left:628px;top:354px;width:258px;height:21px;background:#bdd5a0;border:2px solid #a2dc74;border-radius:7px;"></div>
<span class="t" style="left:650.6px;top:359.0px;width:22px;overflow:hidden;font-size:14px;line-height:18px;letter-spacing:-0.20px;color:#333;">セル</span>
<div class="inp" style="left:675px;top:357px;width:35px;"></div>
<span class="t" style="left:677.0px;top:359.0px;font-size:12px;line-height:16px;letter-spacing:0.00px;color:#111;">A2</span>
<svg style="left:695px;top:359px" width="15" height="15" viewBox="0 0 15 15"><use href="#grid"/></svg>
<svg style="left:712px;top:361px" width="16" height="16" viewBox="0 0 16 16"><use href="#qi"/></svg>
<span class="t" style="left:732.8px;top:359.0px;width:13px;overflow:hidden;font-size:14px;line-height:18px;letter-spacing:0.00px;color:#333;">に</span>
<div class="inp" style="left:747px;top:357px;width:51px;"></div>
<span class="t" style="left:749.0px;top:359.4px;font-size:11.16px;line-height:15.16px;letter-spacing:-0.46px;color:#111;">TRUE</span>
<svg style="left:783px;top:359px" width="15" height="15" viewBox="0 0 15 15"><use href="#grid"/></svg>
<svg style="left:800px;top:361px" width="16" height="16" viewBox="0 0 16 16"><use href="#qi"/></svg>
<span class="t" style="left:818.6px;top:359.0px;width:53px;overflow:hidden;font-size:14px;line-height:18px;letter-spacing:-2.24px;color:#333;">をセットする</span>
<svg style="left:873px;top:357px" width="15" height="15" viewBox="0 0 15 15"><use href="#bq"/></svg>
<span class="t" style="left:610.1px;top:381.0px;width:66px;overflow:hidden;font-size:14px;line-height:18px;letter-spacing:-1.45px;color:#333;">そうでなければ</span>
<div style="left:628px;top:399px;width:267px;height:21px;background:#bdd5a0;border:2px solid #a2dc74;border-radius:7px;"></div>
<span class="t" style="left:650.6px;top:404.0px;width:22px;overflow:hidden;font-size:14px;line-height:18px;letter-spacing:-0.20px;color:#333;">セル</span>
<div class="inp" style="left:675px;top:402px;width:35px;"></div>
<span class="t" style="left:677.0px;top:404.0px;font-size:12px;line-height:16px;letter-spacing:0.00px;color:#111;">A3</span>
<svg style="left:695px;top:404px" width="15" height="15" viewBox="0 0 15 15"><use href="#grid"/></svg>
<svg style="left:712px;top:406px" width="16" height="16" viewBox="0 0 16 16"><use href="#qi"/></svg>
<span class="t" style="left:732.8px;top:404.0px;width:13px;overflow:hidden;font-size:14px;line-height:18px;letter-spacing:0.00px;color:#333;">に</span>
<div class="inp" style="left:747px;top:402px;width:60px;"></div>
<span class="t" style="left:749.0px;top:404.0px;font-size:12px;line-height:16px;letter-spacing:0.51px;color:#111;">=A3+1</span>
<svg style="left:792px;top:404px" width="15" height="15" viewBox="0 0 15 15"><use href="#grid"/></svg>
<svg style="left:809px;top:406px" width="16" height="16" viewBox="0 0 16 16"><use href="#qi"/></svg>
<span class="t" style="left:827.6px;top:404.0px;width:53px;overflow:hidden;font-size:14px;line-height:18px;letter-spacing:-2.24px;color:#333;">をセットする</span>
<svg style="left:882px;top:402px" width="15" height="15" viewBox="0 0 15 15"><use href="#bq"/></svg>
<div style="left:628px;top:427px;width:268px;height:51px;background:#bdd5a0;border:2px solid #a2dc74;border-radius:7px;"></div>
<svg style="left:634px;top:434px" width="13" height="13" viewBox="0 0 13 13"><use href="#minus"/></svg>
<span class="t" style="left:651.1px;top:432.0px;width:22px;overflow:hidden;font-size:14px;line-height:18px;letter-spacing:-0.70px;color:#333;">セル</span>
<div class="inp" style="left:675px;top:430px;width:103px;"></div>
<span class="t" style="left:677.0px;top:432.0px;font-size:12px;line-height:16px;letter-spacing:0.27px;color:#111;">=&quot;C10:K&quot; &amp; A3</span>
<svg style="left:763px;top:432px" width="15" height="15" viewBox="0 0 15 15"><use href="#grid"/></svg>
<svg style="left:780px;top:434px" width="16" height="16" viewBox="0 0 16 16"><use href="#qi"/></svg>
<span class="t" style="left:799.6px;top:432.0px;width:82px;overflow:hidden;font-size:14px;line-height:18px;letter-spacing:-0.53px;color:#333;">の書式を設定する</span>
<svg style="left:882px;top:430px" width="15" height="15" viewBox="0 0 15 15"><use href="#bq"/></svg>
<div style="left:699px;top:450px;width:113px;height:29px;background:#fff"></div>
<div style="left:701px;top:452px;width:107px;height:23px;border:1px solid #222;background:#fff"></div>
<span class="t" style="left:702.5px;top:455.0px;width:66px;overflow:hidden;font-size:15px;line-height:19px;letter-spacing:2.19px;color:#111;">プレビュー</span>
<div class="btn" style="left:819px;top:451px;width:76px;height:26px"></div>
<span class="t" style="left:845.7px;top:456.0px;width:25px;overflow:hidden;font-size:13px;line-height:17px;letter-spacing:4.10px;color:#fff;">書式</span>
<svg style="left:634px;top:491px" width="13" height="13" viewBox="0 0 13 13"><use href="#minus"/></svg>
<span class="t" style="left:649.1px;top:489.0px;width:21px;overflow:hidden;font-size:14px;line-height:18px;letter-spacing:-1.70px;color:#333;">もし</span>
<div class="inp" style="left:673px;top:487px;width:57px;"></div>
<span class="t" style="left:675.0px;top:489.0px;font-size:12px;line-height:16px;letter-spacing:0.67px;color:#111;">A3&gt;10</span>
<svg style="left:715px;top:489px" width="15" height="15" viewBox="0 0 15 15"><use href="#grid"/></svg>
<svg style="left:732px;top:491px" width="16" height="16" viewBox="0 0 16 16"><use href="#qi"/></svg>
<span class="t" style="left:752.1px;top:489.0px;width:32px;overflow:hidden;font-size:14px;line-height:18px;letter-spacing:-0.60px;color:#333;">ならば</span>
<svg style="left:783px;top:487px" width="15" height="15" viewBox="0 0 15 15"><use href="#bq"/></svg>
<div style="left:652px;top:509px;width:377px;height:21px;background:#bdd5a0;border:2px solid #a2dc74;border-radius:7px;"></div>
<span class="t" style="left:674.6px;top:514.0px;width:22px;overflow:hidden;font-size:14px;line-height:18px;letter-spacing:-0.20px;color:#333;">セル</span>
<div class="inp" style="left:699px;top:512px;width:212px;"></div>
<span class="t" style="left:701.0px;top:514.0px;font-size:12px;line-height:16px;letter-spacing:0.31px;color:#111;">=&quot;D10:J&quot; &amp; (INDIRECT(&quot;A3&quot;) * -1)</span>
<svg style="left:896px;top:514px" width="15" height="15" viewBox="0 0 15 15"><use href="#grid"/></svg>
<svg style="left:913px;top:516px" width="16" height="16" viewBox="0 0 16 16"><use href="#qi"/></svg>
<span class="t" style="left:932.6px;top:514.0px;width:83px;overflow:hidden;font-size:14px;line-height:18px;letter-spacing:-0.31px;color:#333;">の入力を許可する</span>
<svg style="left:1015px;top:512px" width="15" height="15" viewBox="0 0 15 15"><use href="#bq"/></svg>
<span class="t" style="left:634.6px;top:536.0px;width:66px;overflow:hidden;font-size:14px;line-height:18px;letter-spacing:-1.45px;color:#333;">そうでなければ</span>
<div class="btn" style="left:23px;top:784px;width:76px;height:29px"></div>
<span class="t" style="left:30.9px;top:789.3px;width:60px;overflow:hidden;font-size:16px;line-height:20px;letter-spacing:-0.32px;color:#fff;">テスト実行</span>
<div class="btn" style="left:108px;top:784px;width:76px;height:29px"></div>
<span class="t" style="left:118.4px;top:789.3px;width:57px;overflow:hidden;font-size:16px;line-height:20px;letter-spacing:2.40px;color:#fff;">順次実行</span>
<div class="btn" style="left:1050px;top:784px;width:76px;height:29px"></div>
<span class="t" style="left:1078.5px;top:790.7px;font-size:14px;line-height:18px;color:#fff;">OK</span>
<div class="btn" style="left:1135px;top:784px;width:76px;height:29px"></div>
<span class="t" style="left:1144.9px;top:789.3px;width:57px;overflow:hidden;font-size:16px;line-height:20px;letter-spacing:-1.07px;color:#fff;">キャンセル</span>
</body></html>
